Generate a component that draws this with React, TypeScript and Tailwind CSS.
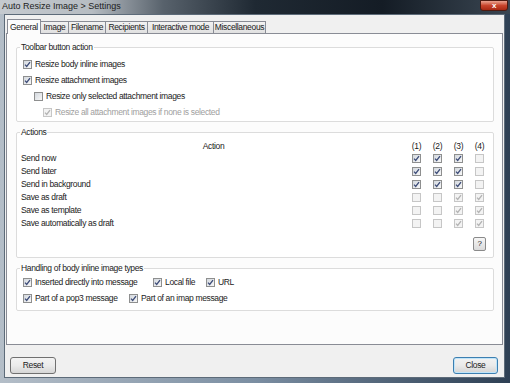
import React from "react";

function Box({ on, off }: { on?: boolean; off?: boolean }) {
  return (
    <span
      className={`inline-flex w-[9px] h-[9px] shrink-0 items-center justify-center border ${
        off
          ? "border-[#c6c6c6] bg-[#f3f3f3]"
          : "border-[#8e8f8f] bg-gradient-to-br from-[#d3d8de] to-[#f8f8f8]"
      }`}
    >
      {on && (
        <svg width="7" height="7" viewBox="0 0 7 7">
          <path
            d="M1 3.6 L2.7 5.4 L6 1.2"
            stroke={off ? "#b3b3b3" : "#3d4c78"}
            strokeWidth="1.3"
            fill="none"
          />
        </svg>
      )}
    </span>
  );
}

function Group({ title, className, children }: { title: string; className?: string; children: React.ReactNode }) {
  return (
    <fieldset className={`ml-[9px] mr-[8px] border border-[#dcdcdc] rounded-[2px] bg-white ${className ?? ""}`}>
      <legend className="ml-[3px] px-[1px] leading-[10px] text-[#222]">{title}</legend>
      {children}
    </fieldset>
  );
}

const tabs = [
  { label: "General", w: "w-[34px]" },
  { label: "Image", w: "w-[28px]" },
  { label: "Filename", w: "w-[37px]" },
  { label: "Recipients", w: "w-[42px]" },
  { label: "Interactive mode", w: "w-[66px]" },
  { label: "Miscellaneous", w: "w-[52px]" },
];

const actions = [
  { label: "Send now", cols: [1, 1, 1, 0], off: false },
  { label: "Send later", cols: [1, 1, 1, 0], off: false },
  { label: "Send in background", cols: [1, 1, 1, 0], off: false },
  { label: "Save as draft", cols: [0, 0, 1, 1], off: true },
  { label: "Save as template", cols: [0, 0, 1, 1], off: true },
  { label: "Save automatically as draft", cols: [0, 0, 1, 1], off: true },
];

export default function App() {
  return (
    <div className="w-[510px] h-[383px] overflow-hidden flex flex-col whitespace-nowrap bg-gradient-to-r from-[#b4bec8] via-[#7b8ea2] to-[#2e4054] font-['Liberation_Sans',Arial,sans-serif] text-[8.5px] tracking-[-0.35px] text-[#1b1b1b]">
      {/* Title bar */}
      <div className="h-[14px] flex items-start bg-[linear-gradient(90deg,#c5cacf_0%,#b6bcc2_18%,#58626c_32%,#1f2933_50%,#141c25_75%,#3a4652_100%)]">
        <span className="ml-[2px] mt-[1px] text-[9px] tracking-normal leading-[11px] text-[#1d1d1d]">
          Auto Resize Image &gt; Settings
        </span>
        <div className="ml-auto mr-[2px] w-[28px] h-[11px] rounded-b-[3px] border border-[#4d1a10] bg-gradient-to-b from-[#e9a290] via-[#c8442c] to-[#a82812] flex items-center justify-center text-white text-[8px] leading-none font-bold">
          x
        </div>
      </div>

      {/* Client area */}
      <div className="ml-[4px] mr-[5px] h-[364px] bg-[#f0f0f0] border border-[#5d6b79] flex flex-col">
        {/* Tabs */}
        <div className="pt-[4px] pl-[2px] h-[18px] flex items-end">
          {tabs.map((t, i) =>
            i === 0 ? (
              <div
                key={t.label}
                className={`${t.w} h-[15px] -mb-[1px] relative z-10 border border-b-0 border-[#898c95] bg-[#fcfcfc] flex items-center justify-center leading-none`}
              >
                {t.label}
              </div>
            ) : (
              <div
                key={t.label}
                className={`${t.w} h-[12px] border-t border-r border-[#898c95] bg-gradient-to-b from-[#f2f2f2] to-[#e0e0e0] flex items-center justify-center leading-none`}
              >
                {t.label}
              </div>
            )
          )}
        </div>

        {/* Panel */}
        <div className="ml-[1px] w-[497px] h-[312px] border border-[#898c95] bg-[#fcfcfc] pt-[8px] flex flex-col">
          <Group title="Toolbar button action" className="pb-[1px]">
            <div className="pt-[4px]">
              <div className="h-[16px] pl-[6px] flex items-center gap-[3px]">
                <Box on />
                <span>Resize body inline images</span>
              </div>
              <div className="h-[16px] pl-[6px] flex items-center gap-[3px]">
                <Box on />
                <span>Resize attachment images</span>
              </div>
              <div className="h-[16px] pl-[17px] flex items-center gap-[3px]">
                <Box />
                <span>Resize only selected attachment images</span>
              </div>
              <div className="h-[16px] pl-[26px] flex items-center gap-[3px]">
                <Box on off />
                <span className="text-[#a0a0a0]">Resize all attachment images if none is selected</span>
              </div>
            </div>
          </Group>

          <Group title="Actions" className="mt-[5px] pb-[6px]">
            <div className="pt-[3px] pl-[4px] pr-[3px]">
              <div className="h-[12px] flex items-center">
                <span className="flex-1 text-center">Action</span>
                {["(1)", "(2)", "(3)", "(4)"].map((h) => (
                  <span key={h} className="w-[21px] text-center">
                    {h}
                  </span>
                ))}
              </div>
              {actions.map((a) => (
                <div key={a.label} className="h-[13px] flex items-center">
                  <span className="flex-1">{a.label}</span>
                  {a.cols.map((c, j) => (
                    <span key={j} className="w-[21px] flex justify-center">
                      <Box on={c === 1} off={a.off || j === 3} />
                    </span>
                  ))}
                </div>
              ))}
              <div className="mt-[7px] flex justify-end">
                <button className="mr-[4px] w-[13px] h-[14px] rounded-[2px] border border-[#8a8a8a] bg-gradient-to-b from-[#f6f6f6] to-[#dadada] flex items-center justify-center leading-none text-[8px]">
                  ?
                </button>
              </div>
            </div>
          </Group>

          <Group title="Handling of body inline image types" className="mt-[5px] pb-[4px]">
            <div className="pt-[1px] pl-[6px]">
              <div className="h-[16px] flex items-center">
                <div className="w-[130px] flex items-center gap-[3px]">
                  <Box on />
                  <span>Inserted directly into message</span>
                </div>
                <div className="w-[53px] flex items-center gap-[3px]">
                  <Box on />
                  <span>Local file</span>
                </div>
                <div className="flex items-center gap-[3px]">
                  <Box on />
                  <span>URL</span>
                </div>
              </div>
              <div className="h-[16px] flex items-center">
                <div className="w-[106px] flex items-center gap-[3px]">
                  <Box on />
                  <span>Part of a pop3 message</span>
                </div>
                <div className="flex items-center gap-[3px]">
                  <Box on />
                  <span>Part of an imap message</span>
                </div>
              </div>
            </div>
          </Group>
        </div>

        {/* Bottom buttons */}
        <div className="mt-[12px] flex">
          <button className="ml-[5px] w-[46px] h-[17px] rounded-[3px] border border-[#707070] bg-gradient-to-b from-[#f3f3f3] via-[#ebebeb] to-[#d6d6d6] leading-none">
            Reset
          </button>
          <button className="ml-auto mr-[6px] w-[45px] h-[17px] rounded-[3px] border border-[#3c7fb1] shadow-[inset_0_0_0_1px_#bfe4f9] bg-gradient-to-b from-[#f2f2f2] via-[#eaeaea] to-[#d4d4d4] leading-none">
            Close
          </button>
        </div>
      </div>
    </div>
  );
}
